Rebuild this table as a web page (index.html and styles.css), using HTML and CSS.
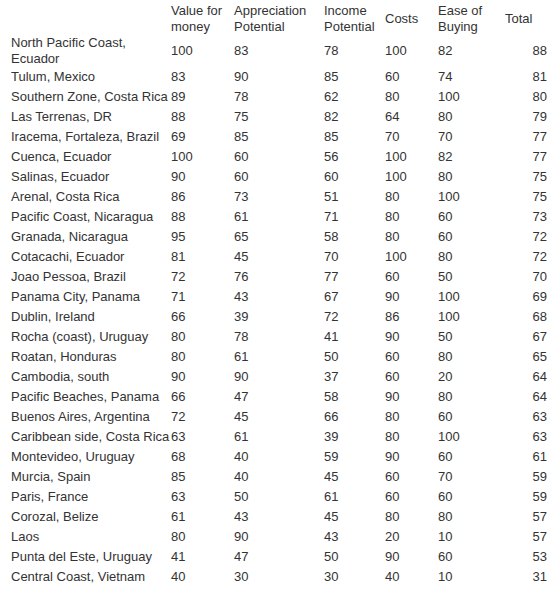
FILE: index.html
```html
<!DOCTYPE html>
<html>
<head>
<meta charset="utf-8">
<link rel="stylesheet" href="styles.css">
</head>
<body>
<table class="scores">
<colgroup>
<col class="c-name"><col class="c-val"><col class="c-app"><col class="c-inc"><col class="c-cost"><col class="c-ease"><col class="c-total">
</colgroup>
<thead>
<tr><th></th><th>Value for<br>money</th><th>Appreciation<br>Potential</th><th>Income<br>Potential</th><th>Costs</th><th>Ease of<br>Buying</th><th>Total</th></tr>
</thead>
<tbody>
<tr class="tall"><td>North Pacific Coast,<br>Ecuador</td><td>100</td><td>83</td><td>78</td><td>100</td><td>82</td><td class="tot">88</td></tr>
<tr><td>Tulum, Mexico</td><td>83</td><td>90</td><td>85</td><td>60</td><td>74</td><td class="tot">81</td></tr>
<tr><td>Southern Zone, Costa Rica</td><td>89</td><td>78</td><td>62</td><td>80</td><td>100</td><td class="tot">80</td></tr>
<tr><td>Las Terrenas, DR</td><td>88</td><td>75</td><td>82</td><td>64</td><td>80</td><td class="tot">79</td></tr>
<tr><td>Iracema, Fortaleza, Brazil</td><td>69</td><td>85</td><td>85</td><td>70</td><td>70</td><td class="tot">77</td></tr>
<tr><td>Cuenca, Ecuador</td><td>100</td><td>60</td><td>56</td><td>100</td><td>82</td><td class="tot">77</td></tr>
<tr><td>Salinas, Ecuador</td><td>90</td><td>60</td><td>60</td><td>100</td><td>80</td><td class="tot">75</td></tr>
<tr><td>Arenal, Costa Rica</td><td>86</td><td>73</td><td>51</td><td>80</td><td>100</td><td class="tot">75</td></tr>
<tr><td>Pacific Coast, Nicaragua</td><td>88</td><td>61</td><td>71</td><td>80</td><td>60</td><td class="tot">73</td></tr>
<tr><td>Granada, Nicaragua</td><td>95</td><td>65</td><td>58</td><td>80</td><td>60</td><td class="tot">72</td></tr>
<tr><td>Cotacachi, Ecuador</td><td>81</td><td>45</td><td>70</td><td>100</td><td>80</td><td class="tot">72</td></tr>
<tr><td>Joao Pessoa, Brazil</td><td>72</td><td>76</td><td>77</td><td>60</td><td>50</td><td class="tot">70</td></tr>
<tr><td>Panama City, Panama</td><td>71</td><td>43</td><td>67</td><td>90</td><td>100</td><td class="tot">69</td></tr>
<tr><td>Dublin, Ireland</td><td>66</td><td>39</td><td>72</td><td>86</td><td>100</td><td class="tot">68</td></tr>
<tr><td>Rocha (coast), Uruguay</td><td>80</td><td>78</td><td>41</td><td>90</td><td>50</td><td class="tot">67</td></tr>
<tr><td>Roatan, Honduras</td><td>80</td><td>61</td><td>50</td><td>60</td><td>80</td><td class="tot">65</td></tr>
<tr><td>Cambodia, south</td><td>90</td><td>90</td><td>37</td><td>60</td><td>20</td><td class="tot">64</td></tr>
<tr><td>Pacific Beaches, Panama</td><td>66</td><td>47</td><td>58</td><td>90</td><td>80</td><td class="tot">64</td></tr>
<tr><td>Buenos Aires, Argentina</td><td>72</td><td>45</td><td>66</td><td>80</td><td>60</td><td class="tot">63</td></tr>
<tr><td>Caribbean side, Costa Rica</td><td>63</td><td>61</td><td>39</td><td>80</td><td>100</td><td class="tot">63</td></tr>
<tr><td>Montevideo, Uruguay</td><td>68</td><td>40</td><td>59</td><td>90</td><td>60</td><td class="tot">61</td></tr>
<tr><td>Murcia, Spain</td><td>85</td><td>40</td><td>45</td><td>60</td><td>70</td><td class="tot">59</td></tr>
<tr><td>Paris, France</td><td>63</td><td>50</td><td>61</td><td>60</td><td>60</td><td class="tot">59</td></tr>
<tr><td>Corozal, Belize</td><td>61</td><td>43</td><td>45</td><td>80</td><td>80</td><td class="tot">57</td></tr>
<tr><td>Laos</td><td>80</td><td>90</td><td>43</td><td>20</td><td>10</td><td class="tot">57</td></tr>
<tr><td>Punta del Este, Uruguay</td><td>41</td><td>47</td><td>50</td><td>90</td><td>60</td><td class="tot">53</td></tr>
<tr><td>Central Coast, Vietnam</td><td>40</td><td>30</td><td>30</td><td>40</td><td>10</td><td class="tot">31</td></tr>
</tbody>
</table>
</body>
</html>
```
FILE: styles.css
```css
html, body {
  background: #ffffff;
}
body {
  margin: 3px 8px 8px 8px;
  font-family: "Liberation Sans", Arial, sans-serif;
  font-size: 13px;
  line-height: 16px;
  color: #333333;
}
.scores {
  width: 542px;
  border-collapse: collapse;
  border-spacing: 0;
  table-layout: fixed;
}
.c-name { width: 160px; }
.c-val { width: 63px; }
.c-app { width: 90px; }
.c-inc { width: 61px; }
.c-cost { width: 53px; }
.c-ease { width: 67px; }
.c-total { width: 48px; }
.scores th,
.scores td {
  padding: 0 3px;
  font-weight: normal;
  text-align: left;
  vertical-align: middle;
  white-space: nowrap;
}
.scores th {
  height: 32px;
}
.scores td {
  height: 20px;
}
.scores td.tot {
  text-align: right;
}
```
